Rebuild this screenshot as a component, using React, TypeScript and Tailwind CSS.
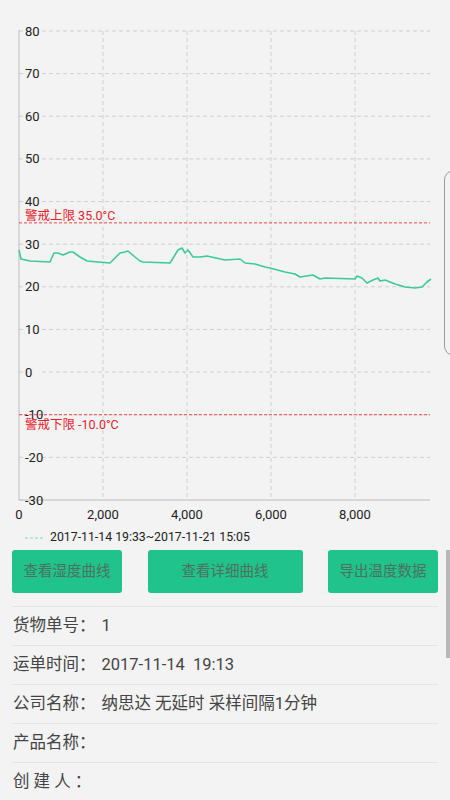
const yTicks = [80, 70, 60, 50, 40, 30, 20, 10, 0, -10, -20, -30];
const xTicks = [
  { label: "0", x: 19 },
  { label: "2,000", x: 103 },
  { label: "4,000", x: 187 },
  { label: "6,000", x: 271 },
  { label: "8,000", x: 355 },
];

const top = 31;
const bottom = 500;
const left = 19;
const right = 430;
const yOf = (v: number) => top + ((80 - v) * (bottom - top)) / 110;

const line: [number, number][] = [
  [19, 250], [21, 259], [30, 261], [50, 262], [54, 253], [58, 253], [63, 255], [70, 252],
  [73, 252], [80, 257], [87, 261], [110, 263], [120, 253], [125, 252], [128, 251], [135, 257],
  [140, 261], [143, 262], [170, 263], [178, 250], [182, 248], [185, 253], [188, 250], [193, 257],
  [200, 257], [207, 256], [225, 260], [240, 259], [245, 263], [255, 264], [265, 267], [270, 268],
  [285, 272], [295, 274], [300, 277], [313, 275], [320, 279], [325, 278], [355, 279], [357, 276],
  [362, 278], [367, 283], [373, 280], [378, 278], [380, 281], [385, 280], [395, 284], [405, 287],
  [415, 288], [422, 287], [427, 282], [431, 279],
];

const rows = [
  { k: "货物单号：", v: "1" },
  { k: "运单时间：", v: "2017-11-14  19:13" },
  { k: "公司名称：", v: "纳思达 无延时 采样间隔1分钟" },
  { k: "产品名称：", v: "" },
  { k: "创 建 人 ：", v: "" },
];

function Chart() {
  return (
    <svg width={450} height={525} className="block">
      {/* horizontal grid */}
      {yTicks.map((t) => (
        <g key={t}>
          <line x1={left} x2={24} y1={yOf(t)} y2={yOf(t)} stroke="#cfcfcf" strokeDasharray="4 3" />
          {t !== -30 && (
            <line x1={42} x2={right} y1={yOf(t)} y2={yOf(t)} stroke="#cfcfcf" strokeDasharray="4 3" />
          )}
        </g>
      ))}
      {/* vertical grid */}
      {xTicks.slice(1).map((t) => (
        <line key={t.label} x1={t.x} x2={t.x} y1={top} y2={bottom} stroke="#cfcfcf" strokeDasharray="4 3" />
      ))}
      <line x1={left} x2={left} y1={top - 1} y2={bottom} stroke="#bdbdbd" />
      <line x1={left} x2={right} y1={bottom} y2={bottom} stroke="#bdbdbd" />

      {/* limit lines */}
      <line x1={left} x2={right} y1={yOf(35)} y2={yOf(35)} stroke="#f04848" strokeDasharray="3 2" />
      <line x1={left} x2={right} y1={yOf(-10)} y2={yOf(-10)} stroke="#f04848" strokeDasharray="3 2" />

      <polyline
        points={line.map((p) => p.join(",")).join(" ")}
        fill="none"
        stroke="#3ccb98"
        strokeWidth={1.6}
        strokeLinejoin="round"
      />

      <g fontFamily="Roboto, 'Noto Sans CJK SC', sans-serif">
        {yTicks.map((t) => (
          <text key={t} x={25} y={yOf(t) + 4.5} fontSize={13} fill="#222">
            {t}
          </text>
        ))}
        {xTicks.map((t) => (
          <text key={t.label} x={t.x} y={519} fontSize={13} fill="#222" textAnchor="middle">
            {t.label}
          </text>
        ))}
        <text x={25} y={220} fontSize={12.5} fill="#e8202a">
          警戒上限 35.0°C
        </text>
        <text x={25} y={429} fontSize={12.5} fill="#e8202a">
          警戒下限 -10.0°C
        </text>
      </g>
    </svg>
  );
}

export default function App() {
  return (
    <div
      className="relative w-[450px] h-[800px] overflow-hidden bg-[#f3f3f3]"
      style={{ fontFamily: "Roboto, 'Noto Sans CJK SC', sans-serif" }}
    >
      <Chart />

      {/* legend */}
      <div className="flex items-center h-[25px] pl-[25px]">
        <svg width={18} height={4}>
          <line x1={0} x2={18} y1={2} y2={2} stroke="#7fd8b8" strokeDasharray="3 2" />
        </svg>
        <span className="ml-[7px] text-[12.3px] text-[#222]">2017-11-14 19:33~2017-11-21 15:05</span>
      </div>

      {/* buttons */}
      <div className="flex items-center justify-between px-3">
        <button className="w-[110px] h-[43px] rounded-[3px] bg-[#1fc38b] text-[14.5px] text-[#4f6f60]">
          查看湿度曲线
        </button>
        <button className="w-[155px] h-[43px] rounded-[3px] bg-[#1fc38b] text-[14.5px] text-[#4f6f60]">
          查看详细曲线
        </button>
        <button className="w-[110px] h-[43px] rounded-[3px] bg-[#1fc38b] text-[14.5px] text-[#4f6f60]">
          导出温度数据
        </button>
      </div>

      {/* info rows */}
      <div className="mt-[13px] px-3">
        {rows.map((r) => (
          <div key={r.k} className="flex items-center h-[39px] border-t border-[#e4e4e4] pl-px text-[16.5px] text-[#444] whitespace-pre">
            <span>{r.k}</span>
            {r.v && <span className="ml-[6px]">{r.v}</span>}
          </div>
        ))}
      </div>

      {/* side pull tab */}
      <div className="absolute left-[444px] top-[170px] w-[20px] h-[186px] rounded-[10px] border border-[#9a9a9a]" />
      {/* scrollbar */}
      <div className="absolute left-[446px] top-[550px] w-[4px] h-[108px] bg-[#b8b8b8]" />
    </div>
  );
}
